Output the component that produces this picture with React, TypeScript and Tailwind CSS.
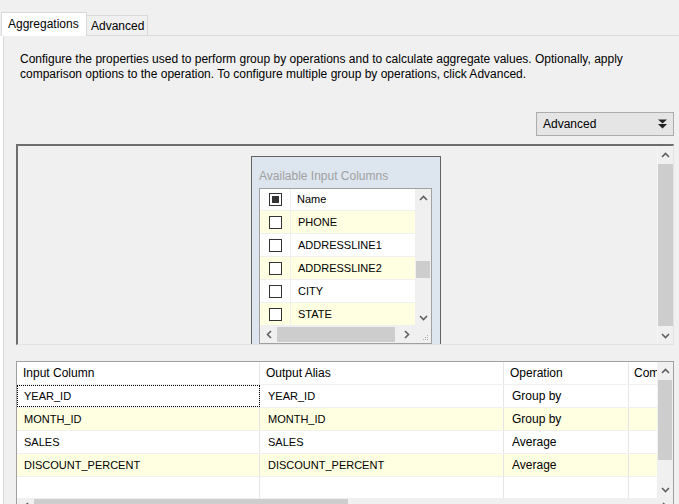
import React from 'react';

const listRows = ['PHONE', 'ADDRESSLINE1', 'ADDRESSLINE2', 'CITY', 'STATE'];

const gridRows = [
  { input: 'YEAR_ID', alias: 'YEAR_ID', op: 'Group by' },
  { input: 'MONTH_ID', alias: 'MONTH_ID', op: 'Group by' },
  { input: 'SALES', alias: 'SALES', op: 'Average' },
  { input: 'DISCOUNT_PERCENT', alias: 'DISCOUNT_PERCENT', op: 'Average' },
];

const Chevron: React.FC<{ dir: 'up' | 'down' | 'left' | 'right' }> = ({ dir }) => {
  if (dir === 'up' || dir === 'down') {
    return (
      <svg width="9" height="6" viewBox="0 0 9 6">
        <polyline
          points={dir === 'up' ? '1,5 4.5,1.5 8,5' : '1,1 4.5,4.5 8,1'}
          fill="none"
          stroke="#606060"
          strokeWidth="1.6"
        />
      </svg>
    );
  }
  return (
    <svg width="6" height="9" viewBox="0 0 6 9">
      <polyline
        points={dir === 'left' ? '5,1 1.5,4.5 5,8' : '1,1 4.5,4.5 1,8'}
        fill="none"
        stroke="#606060"
        strokeWidth="1.6"
      />
    </svg>
  );
};

const CheckBox: React.FC<{ mixed?: boolean }> = ({ mixed }) => (
  <div className="w-[13px] h-[13px] border border-[#333333] bg-white flex items-center justify-center">
    {mixed && <div className="w-[7px] h-[7px] bg-[#333333]" />}
  </div>
);

export default function App() {
  return (
    <div className="w-[679px] h-[504px] overflow-hidden bg-[#f0f0f0] text-black text-[12px] font-['Liberation_Sans',Arial,sans-serif]">
      {/* Tabs */}
      <div className="flex h-[36px] items-end">
        <div className="ml-[1px] w-[86px] h-[24px] bg-white border border-b-0 border-[#d9d9d9] pl-[6px] leading-[22px]">
          Aggregations
        </div>
        <div className="w-[61px] h-[21px] border border-l-0 border-[#d9d9d9] pl-[4px] leading-[20px]">
          Advanced
        </div>
        <div className="flex-1 h-full border-b border-[#d9d9d9]" />
      </div>

      {/* Tab body */}
      <div className="flex h-[468px] border-l-[3px] border-white">
        <div className="flex-1 min-w-0 flex flex-col border-l border-[#dadada]">
          <p className="pl-[16px] pt-[16px] leading-[15px]">
            Configure the properties used to perform group by operations and to calculate aggregate values. Optionally, apply
            <br />
            comparison options to the operation. To configure multiple group by operations, click Advanced.
          </p>

          <div className="mt-[30px] flex justify-end pr-[5px]">
            <div className="w-[138px] h-[24px] shrink-0 bg-[#e5e5e5] border border-[#adadad] flex items-center justify-between pl-[6px] pr-[6px]">
              <span>Advanced</span>
              <svg width="9" height="10" viewBox="0 0 9 10">
                <path d="M0 0.5h9l-4.5 4z M0 5h9l-4.5 4.5z" fill="#222222" />
              </svg>
            </div>
          </div>

          {/* Designer canvas */}
          <div className="mt-[8px] ml-[12px] mr-[5px] h-[201px] flex overflow-hidden border-t-2 border-l-2 border-r border-b border-t-[#6d6d6d] border-l-[#6d6d6d] border-r-[#e3e3e3] border-b-[#e3e3e3]">
            <div className="relative flex-1 min-w-0">
              <div className="absolute left-[233px] top-[10px] w-[190px] h-[200px] border border-[#646464] bg-[#dde6ef]">
                <div className="pl-[7px] pt-[12px] leading-[15px] text-[#a0a0a0]">Available Input Columns</div>
                <div className="mt-[4px] ml-[7px] w-[173px] border border-[#a0a0a0] bg-white">
                  <div className="flex">
                    <div className="flex-1 min-w-0">
                      <div className="flex h-[22px] border-b border-[#f0f0f0]">
                        <div className="w-[31px] border-r border-[#f0f0f0] flex items-center justify-center">
                          <CheckBox mixed />
                        </div>
                        <div className="flex-1 pl-[6px] flex items-center text-[11px]">Name</div>
                      </div>
                      {listRows.map((r, i) => (
                        <div
                          key={r}
                          className={`flex h-[23px] border-b border-[#f0f0f0] ${i % 2 === 0 ? 'bg-[#ffffe1]' : 'bg-white'}`}
                        >
                          <div className="w-[31px] border-r border-[#f0f0f0] flex items-center justify-center">
                            <CheckBox />
                          </div>
                          <div className="flex-1 pl-[7px] flex items-center text-[11px]">{r}</div>
                        </div>
                      ))}
                    </div>
                    <div className="w-[16px] shrink-0 bg-[#f0f0f0] flex flex-col">
                      <div className="h-[17px] flex items-center justify-center"><Chevron dir="up" /></div>
                      <div className="h-[55px]" />
                      <div className="h-[17px] bg-[#cdcdcd] mx-[1px]" />
                      <div className="flex-1" />
                      <div className="h-[17px] flex items-center justify-center"><Chevron dir="down" /></div>
                    </div>
                  </div>
                  <div className="flex h-[17px] bg-[#f0f0f0]">
                    <div className="w-[17px] flex items-center justify-center"><Chevron dir="left" /></div>
                    <div className="w-[118px] bg-[#cdcdcd] my-[1px]" />
                    <div className="flex-1" />
                    <div className="w-[17px] flex items-center justify-center"><Chevron dir="right" /></div>
                    <div className="w-[16px] flex items-end justify-end p-[2px]">
                      <svg width="7" height="7" viewBox="0 0 7 7" fill="#b0b0b0">
                        <rect x="5" y="1" width="1" height="1" />
                        <rect x="3" y="3" width="1" height="1" />
                        <rect x="5" y="3" width="1" height="1" />
                        <rect x="1" y="5" width="1" height="1" />
                        <rect x="3" y="5" width="1" height="1" />
                        <rect x="5" y="5" width="1" height="1" />
                      </svg>
                    </div>
                  </div>
                </div>
              </div>
            </div>
            <div className="w-[16px] shrink-0 flex flex-col border-l border-[#f6f6f6]">
              <div className="h-[17px] flex items-center justify-center"><Chevron dir="up" /></div>
              <div className="flex-1 bg-[#cdcdcd] my-[1px]" />
              <div className="h-[17px] flex items-center justify-center"><Chevron dir="down" /></div>
            </div>
          </div>

          {/* Aggregation grid */}
          <div className="mt-[16px] ml-[12px] mr-[5px] flex-1 min-h-0 flex flex-col overflow-hidden border border-b-0 border-[#a0a0a0] bg-white">
            <div className="flex h-[136px] shrink-0">
              <div className="flex-1 min-w-0 flex flex-col">
                <div className="flex h-[23px] border-b border-[#f0f0f0]">
                  <div className="w-[243px] shrink-0 border-r border-[#e5e5e5] pl-[6px] flex items-center">Input Column</div>
                  <div className="w-[244px] shrink-0 border-r border-[#e5e5e5] pl-[6px] flex items-center">Output Alias</div>
                  <div className="w-[125px] shrink-0 border-r border-[#e5e5e5] pl-[6px] flex items-center">Operation</div>
                  <div className="flex-1 min-w-0 pl-[5px] flex items-center overflow-hidden whitespace-nowrap">Comparison Flags</div>
                </div>
                {gridRows.map((r, i) => (
                  <div
                    key={r.input}
                    className={`flex h-[23px] border-b border-[#f0f0f0] ${i % 2 === 1 ? 'bg-[#ffffe1]' : 'bg-white'}`}
                  >
                    <div
                      className={`w-[243px] shrink-0 border-r border-[#e5e5e5] pl-[7px] flex items-center text-[11px] ${i === 0 ? 'outline-1 outline-dotted outline-black -outline-offset-1' : ''}`}
                    >
                      {r.input}
                    </div>
                    <div className="w-[244px] shrink-0 border-r border-[#e5e5e5] pl-[8px] flex items-center text-[11px]">{r.alias}</div>
                    <div className="w-[125px] shrink-0 border-r border-[#e5e5e5] pl-[8px] flex items-center">{r.op}</div>
                    <div className="flex-1 min-w-0" />
                  </div>
                ))}
                <div className="flex flex-1">
                  <div className="w-[243px] shrink-0 border-r border-[#e5e5e5]" />
                  <div className="w-[244px] shrink-0 border-r border-[#e5e5e5]" />
                  <div className="w-[125px] shrink-0 border-r border-[#e5e5e5]" />
                  <div className="flex-1 min-w-0" />
                </div>
              </div>
              <div className="w-[16px] shrink-0 bg-[#f0f0f0] flex flex-col">
                <div className="h-[17px] flex items-center justify-center"><Chevron dir="up" /></div>
                <div className="h-[1px]" />
                <div className="h-[80px] bg-[#cdcdcd] mx-[1px]" />
                <div className="flex-1" />
                <div className="h-[17px] flex items-center justify-center"><Chevron dir="down" /></div>
              </div>
            </div>
            <div className="flex h-[17px] shrink-0 bg-[#f0f0f0]">
              <div className="w-[17px] flex items-center justify-center"><Chevron dir="left" /></div>
              <div className="w-[314px] bg-[#cdcdcd] my-[1px]" />
              <div className="flex-1" />
              <div className="w-[17px] flex items-center justify-center"><Chevron dir="right" /></div>
            </div>
          </div>
        </div>
      </div>
    </div>
  );
}
